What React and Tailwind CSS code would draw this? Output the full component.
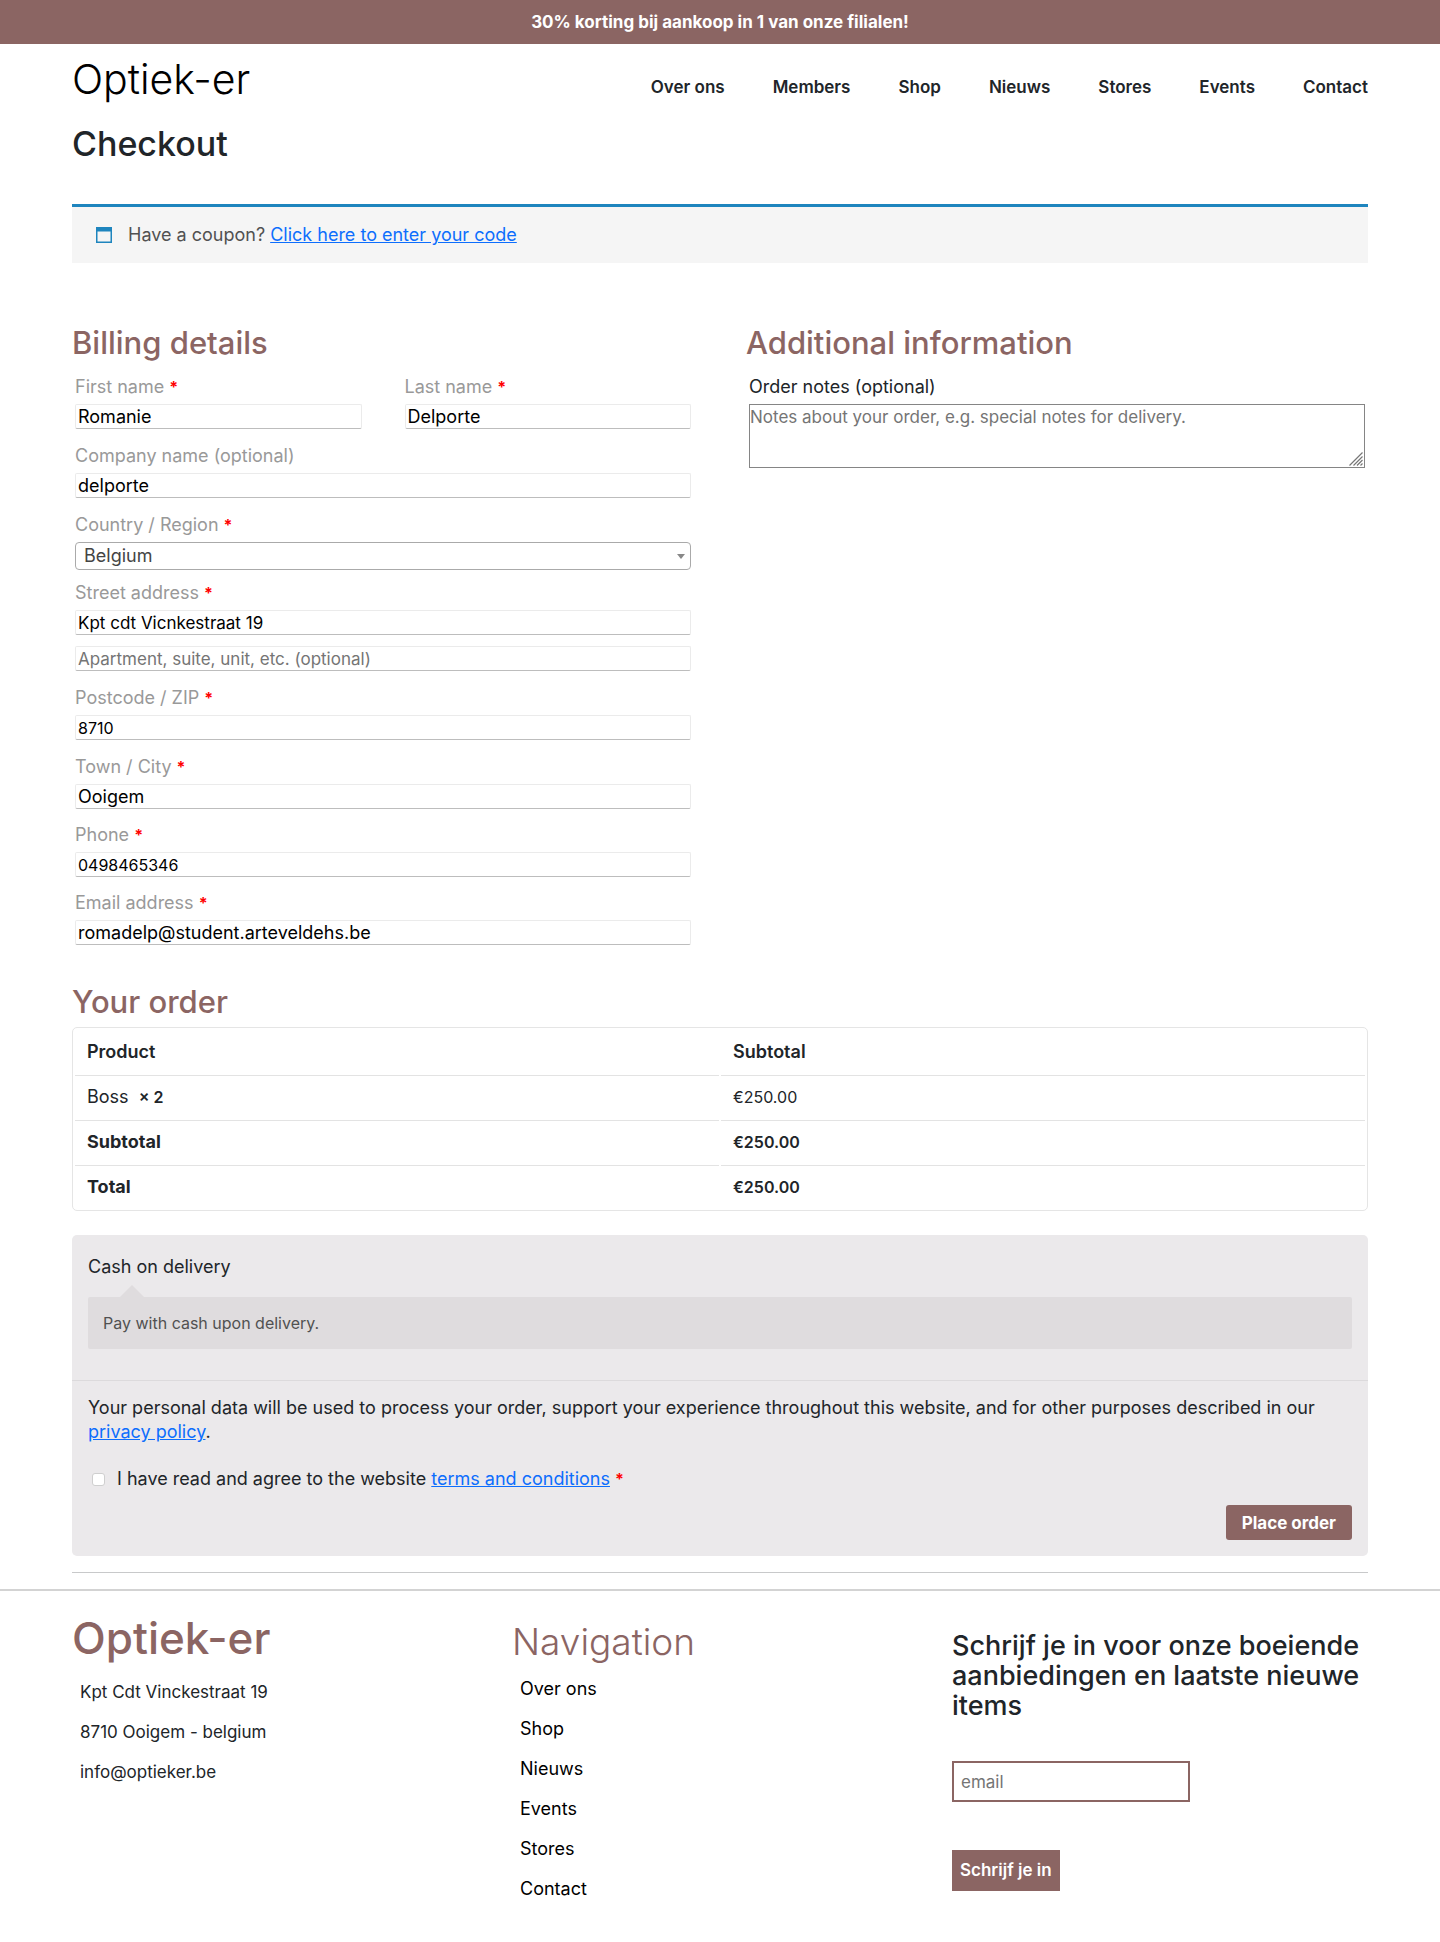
const NAV = ["Over ons", "Members", "Shop", "Nieuws", "Stores", "Events", "Contact"];
const FOOTER_NAV = ["Over ons", "Shop", "Nieuws", "Events", "Stores", "Contact"];
const ADDRESS = ["Kpt Cdt Vinckestraat 19", "8710 Ooigem - belgium", "info@optieker.be"];

const inputStyle =
  "block h-[25px] w-full rounded-[2px] border border-[#ebebeb] border-b-[#bdbdbd] bg-white px-[2px] leading-[22px] text-black outline-none placeholder:text-[#757575]";

function Required() {
  return <span className="text-base leading-5 font-bold text-[#ff0000]">*</span>;
}

function Label({ id, required, children }) {
  return (
    <label htmlFor={id} className="mb-[5px] block h-6 leading-6 text-[#999]">
      {children} {required && <Required />}
    </label>
  );
}

function Field({ id, label, required, value, type = "text", size = "text-lg" }) {
  return (
    <div>
      <Label id={id} required={required}>{label}</Label>
      <input id={id} type={type} defaultValue={value} className={`${inputStyle} ${size}`} />
    </div>
  );
}

function Heading({ children }) {
  return <h3 className="text-[31px] leading-[34px] font-medium text-[#8b6563]">{children}</h3>;
}

function CouponBar() {
  return (
    <div className="mt-[38px] flex h-[59px] items-center border-t-[3px] border-[#1e85be] bg-[#f5f5f5] pl-6 text-[#515151]">
      <svg className="mr-4 h-4 w-4" viewBox="0 0 16 16" aria-hidden="true">
        <path fill="#1e85be" d="M0 0h16v16H0zM1.500 4.500v10h13v-10z" fillRule="evenodd" />
      </svg>
      <p>
        Have a coupon?{" "}
        <a href="#coupon" className="text-[#0d6efd] underline">Click here to enter your code</a>
      </p>
    </div>
  );
}

function Billing() {
  return (
    <section>
      <Heading>Billing details</Heading>
      <div className="mt-[15px] flex flex-col gap-[15px] px-[3px]">
        <div className="grid grid-cols-2 gap-[43px]">
          <Field id="first" label="First name" required value="Romanie" />
          <Field id="last" label="Last name" required value="Delporte" />
        </div>
        <Field id="company" label="Company name (optional)" value="delporte" />
        <div className="flex flex-col gap-[11px]">
          <div>
            <Label id="country" required>Country / Region</Label>
            <div className="relative">
              <select
                id="country"
                className="block h-7 w-full appearance-none rounded-[4px] border border-[#aaa] bg-white pl-2 text-lg leading-[26px] text-[#444] outline-none"
              >
                <option>Belgium</option>
              </select>
              <svg className="pointer-events-none absolute top-3 right-[6px] h-[5px] w-2" viewBox="0 0 8 5" aria-hidden="true">
                <path fill="#888" d="M0 0h8L4 5z" />
              </svg>
            </div>
          </div>
          <Field id="street" label="Street address" required value="Kpt cdt Vicnkestraat 19" size="text-[17px]" />
          <input
            aria-label="Apartment"
            type="text"
            placeholder="Apartment, suite, unit, etc. (optional)"
            className={`${inputStyle} text-[17px]`}
          />
        </div>
        <Field id="zip" label="Postcode / ZIP" required value="8710" size="text-base" />
        <div className="flex flex-col gap-[14px]">
          <Field id="city" label="Town / City" required value="Ooigem" />
          <Field id="phone" label="Phone" required type="tel" value="0498465346" size="text-base" />
          <Field id="email" label="Email address" required type="email" value="romadelp@student.arteveldehs.be" />
        </div>
      </div>
    </section>
  );
}

function Additional() {
  return (
    <section>
      <Heading>Additional information</Heading>
      <div className="mt-[15px] px-[3px]">
        <label htmlFor="notes" className="mb-[5px] block leading-6">Order notes (optional)</label>
        <div className="relative">
          <textarea
            id="notes"
            placeholder="Notes about your order, e.g. special notes for delivery."
            className="block h-16 w-full resize-none border border-[#858585] bg-white text-[17px] leading-6 outline-none placeholder:text-[#757575]"
          />
          <svg className="pointer-events-none absolute right-[2px] bottom-[2px] h-[14px] w-[14px]" viewBox="0 0 14 14" aria-hidden="true">
            <path stroke="#777" fill="none" strokeWidth="1.200" d="M.5 13.500l13-13M4.500 13.500l9-9M8 13.500l5.500-5.500M11.500 13.500l2-2" />
          </svg>
        </div>
      </div>
    </section>
  );
}

function OrderTable() {
  const cell = "border-t border-[#e3e3e3] px-3 py-[9px]";
  const amount = "border-t border-[#e3e3e3] px-3 py-[9px] text-base leading-6";
  const head = "px-3 pt-[10px] pb-[9px] font-semibold";
  return (
    <table className="mt-2 w-full table-fixed border-separate border-spacing-[2px] rounded-[5px] border border-[#e5e5e5] text-left leading-6">
      <thead>
        <tr>
          <th className={head}>Product</th>
          <th className={head}>Subtotal</th>
        </tr>
      </thead>
      <tbody>
        <tr>
          <td className={cell}>Boss&nbsp; <strong className="text-base leading-6 font-semibold">×&nbsp;2</strong></td>
          <td className={amount}>€250.00</td>
        </tr>
      </tbody>
      <tfoot className="font-semibold">
        <tr>
          <th className={cell}>Subtotal</th>
          <td className={amount}>€250.00</td>
        </tr>
        <tr>
          <th className={cell}>Total</th>
          <td className={amount}>€250.00</td>
        </tr>
      </tfoot>
    </table>
  );
}

function Payment() {
  return (
    <div className="mt-6 rounded-[5px] bg-[#ebe9eb] leading-6">
      <div className="border-b border-[#dcdadc] px-4 pt-5 pb-[31px]">
        <p>Cash on delivery</p>
        <div className="relative mt-[18px] rounded-[2px] bg-[#dfdcde] px-[15px] py-[14px] text-base leading-6 text-[#515151]">
          <svg className="absolute -top-[14px] left-8 h-[14px] w-6" viewBox="0 0 24 14" aria-hidden="true">
            <path fill="#dfdcde" d="M0 14 12 2l12 12z" />
          </svg>
          Pay with cash upon delivery.
        </div>
      </div>
      <div className="px-4 pt-[15px] pb-4">
        <p>
          Your personal data will be used to process your order, support your experience throughout this website, and for other purposes described in our{" "}
          <a href="#privacy" className="whitespace-nowrap text-[#0d6efd] underline">privacy policy</a>.
        </p>
        <div className="mt-[23px] flex items-center pl-1">
          <input
            id="terms"
            type="checkbox"
            className="mr-3 h-[13px] w-[13px] appearance-none rounded-[3px] border border-[#cfcfcf] bg-white"
          />
          <label htmlFor="terms" className="h-6">
            I have read and agree to the website{" "}
            <a href="#terms" className="text-[#0d6efd] underline">terms and conditions</a> <Required />
          </label>
        </div>
        <div className="mt-[14px] flex justify-end">
          <button type="button" className="h-[35px] rounded-[3px] bg-[#8b6563] px-4 text-[17px] font-bold text-white">
            Place order
          </button>
        </div>
      </div>
    </div>
  );
}

function Footer() {
  return (
    <footer className="mt-4 border-t-2 border-[#d3d3d3]">
      <div className="grid grid-cols-3 gap-6 px-[72px]">
        <div>
          <h2 className="mt-[23px] text-[44px] leading-[48px] font-medium text-[#8b6563]">Optiek-er</h2>
          <ul className="mt-[18px] flex flex-col gap-4 pl-2 text-[17px] leading-6">
            {ADDRESS.map((line) => <li key={line}>{line}</li>)}
          </ul>
        </div>
        <nav aria-label="Footer">
          <h2 className="mt-[31px] text-[37px] leading-10 font-light text-[#8b6563]">Navigation</h2>
          <ul className="mt-[15px] flex flex-col gap-4 pl-2 leading-6 text-black">
            {FOOTER_NAV.map((item) => <li key={item}><a href="#nav">{item}</a></li>)}
          </ul>
        </nav>
        <form>
          <h3 className="mt-10 text-[27px] leading-[30px] font-medium">
            Schrijf je in voor onze boeiende aanbiedingen en laatste nieuwe items
          </h3>
          <input
            type="email"
            aria-label="email"
            placeholder="email"
            className="mt-10 block h-[41px] w-[238px] border-2 border-[#8b6563] bg-white px-[7px] text-[17px] outline-none placeholder:text-[#757575]"
          />
          <button type="button" className="mt-12 mb-12 block h-[41px] bg-[#8b6563] px-2 text-[17px] font-semibold text-white">
            Schrijf je in
          </button>
        </form>
      </div>
    </footer>
  );
}

export default function App() {
  return (
    <div className="bg-white font-['Inter',sans-serif] text-lg text-[#212529]">
      <div className="flex h-11 items-center justify-center bg-[#8b6563] text-[17px] font-bold text-white">
        30% korting bij aankoop in 1 van onze filialen!
      </div>
      <header className="flex items-center justify-between px-[72px] pt-2">
        <a href="#home" className="text-[41px] leading-[54px] font-light text-black">Optiek-er</a>
        <nav aria-label="Main" className="flex gap-12 pt-4 text-[17px] leading-6 font-semibold">
          {NAV.map((item) => <a key={item} href="#nav">{item}</a>)}
        </nav>
      </header>
      <main className="px-[72px]">
        <h1 className="mt-[18px] text-[34px] leading-10 font-medium">Checkout</h1>
        <div className="pt-[2px]">
          <CouponBar />
        </div>
        <div className="mt-[63px] grid grid-cols-2 gap-[52px]">
          <Billing />
          <Additional />
        </div>
        <div className="mt-10">
          <Heading>Your order</Heading>
        </div>
        <OrderTable />
        <Payment />
        <hr className="mt-4 border-t border-[#c8c9ca]" />
      </main>
      <Footer />
    </div>
  );
}
